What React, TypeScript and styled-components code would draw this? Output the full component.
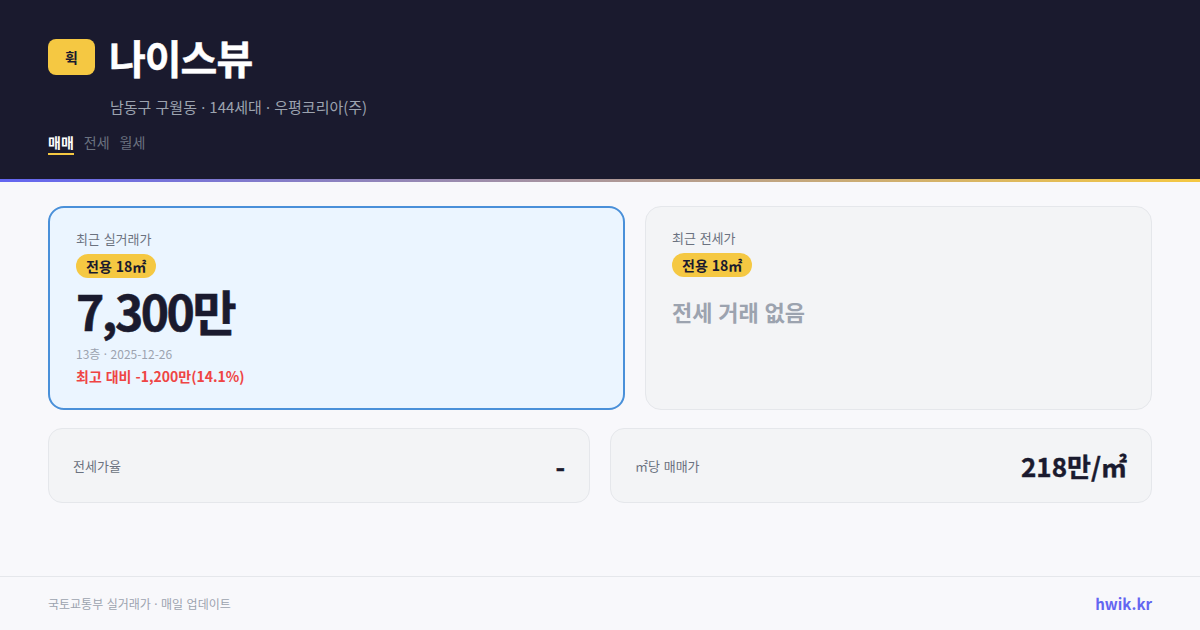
import React from "react";
import styled, { createGlobalStyle } from "styled-components";

const Global = createGlobalStyle`
  * { box-sizing: border-box; }
  html, body { margin: 0; padding: 0; }
  body {
    background: #f8f8fb;
    font-family: "Noto Sans CJK KR", "Noto Sans", sans-serif;
    word-spacing: 0.05em;
  }
`;

const Page = styled.div`
  width: 1200px;
  height: 630px;
  display: flex;
  flex-direction: column;
  background: #f8f8fb;
  overflow: hidden;
`;
const Header = styled.header`
  height: 182px;
  background: #1a1a2e;
  padding: 30px 48px 0;
  border-bottom: 3px solid;
  border-image: linear-gradient(90deg, #6366f1, #f5c842) 1;
`;
const TitleRow = styled.div`
  display: flex;
  align-items: center;
  gap: 14px;
  height: 54px;
`;
const Logo = styled.div`
  width: 47px;
  height: 36px;
  border-radius: 8px;
  background: #f5c842;
  color: #1a1a2e;
  font-size: 14px;
  font-weight: 700;
  display: flex;
  align-items: center;
  justify-content: center;
`;
const Title = styled.h1`
  margin: 0;
  color: #fff;
  font-size: 40px;
  line-height: 54px;
  font-weight: 700;
  letter-spacing: -1px;
  -webkit-text-stroke: 0.5px #fff;
`;
const Sub = styled.div`
  margin: 12px 0 0 62px;
  color: #9ca3af;
  font-size: 15px;
  line-height: 22px;
`;
const Dot = styled.span`
  font-family: "Noto Sans", sans-serif;
`;
const Tabs = styled.div`
  display: flex;
  gap: 10px;
  margin-top: 15px;
`;
const Tab = styled.span<{ $active?: boolean }>`
  height: 22px;
  color: ${(p) => (p.$active ? "#fff" : "#6b7280")};
  font-size: 14px;
  font-weight: ${(p) => (p.$active ? 700 : 400)};
  line-height: 18px;
  border-bottom: 2px solid ${(p) => (p.$active ? "#f5c842" : "transparent")};
`;
const Main = styled.main`
  flex: 1;
  padding: 24px 48px 0;
  display: flex;
  flex-direction: column;
  gap: 18px;
`;
const TopGrid = styled.div`
  display: grid;
  grid-template-columns: 577px 507px;
  grid-template-rows: 204px;
  gap: 20px;
`;
const PriceCard = styled.section<{ $hot?: boolean }>`
  border-radius: 16px;
  border: ${(p) => (p.$hot ? "2px solid #4a90d9" : "1px solid #e5e7eb")};
  background: ${(p) => (p.$hot ? "#ebf5ff" : "#f3f4f6")};
  padding: 21px 26px;
`;
const Label = styled.div`
  color: #6b7280;
  font-size: 13px;
  line-height: 19px;
`;
const Badge = styled.div`
  width: fit-content;
  margin-top: 6px;
  height: 24px;
  padding: 0 10px;
  border-radius: 12px;
  background: #f5c842;
  color: #1a1a2e;
  font-size: 14px;
  line-height: 24px;
  font-weight: 700;
`;
const Price = styled.div`
  color: #1a1a2e;
  font-size: 48px;
  font-weight: 700;
  line-height: 62px;
  letter-spacing: -2.5px;
  margin-top: 1px;
  -webkit-text-stroke: 0.6px #1a1a2e;
`;
const Empty = styled.div`
  color: #9ca3af;
  font-size: 22px;
  font-weight: 700;
  line-height: 32px;
  margin-top: 18px;
`;
const Meta = styled.div`
  color: #9ca3af;
  font-size: 12px;
  line-height: 18px;
  margin-top: 4px;
`;
const Diff = styled.div`
  color: #ef4444;
  font-size: 14px;
  font-weight: 700;
  line-height: 20px;
  margin-top: 2px;
`;
const BottomGrid = styled.div`
  display: grid;
  grid-template-columns: 1fr 1fr;
  gap: 20px;
`;
const StatCard = styled.section`
  height: 75px;
  border-radius: 14px;
  border: 1px solid #e5e7eb;
  background: #f3f4f6;
  padding: 0 24px;
  display: flex;
  align-items: center;
  justify-content: space-between;
`;
const StatValue = styled.div`
  color: #1a1a2e;
  font-size: 26px;
  font-weight: 700;
  -webkit-text-stroke: 0.4px #1a1a2e;
`;
const Footer = styled.footer`
  height: 54px;
  border-top: 1px solid #e5e7eb;
  padding: 0 48px;
  display: flex;
  align-items: center;
  justify-content: space-between;
`;
const FootText = styled.span`
  color: #9ca3af;
  font-size: 12px;
`;
const Brand = styled.span`
  color: #6366f1;
  font-size: 15px;
  font-weight: 700;
`;

export default function App() {
  return (
    <Page>
      <Global />
      <Header>
        <TitleRow>
          <Logo>휙</Logo>
          <Title>나이스뷰</Title>
        </TitleRow>
        <Sub>
          남동구 구월동 <Dot>·</Dot> 144세대 <Dot>·</Dot> 우평코리아(주)
        </Sub>
        <Tabs>
          <Tab $active>매매</Tab>
          <Tab>전세</Tab>
          <Tab>월세</Tab>
        </Tabs>
      </Header>
      <Main>
        <TopGrid>
          <PriceCard $hot>
            <Label>최근 실거래가</Label>
            <Badge>전용 18㎡</Badge>
            <Price>7,300만</Price>
            <Meta>
              13층 <Dot>·</Dot> 2025-12-26
            </Meta>
            <Diff>최고 대비 -1,200만(14.1%)</Diff>
          </PriceCard>
          <PriceCard>
            <Label>최근 전세가</Label>
            <Badge>전용 18㎡</Badge>
            <Empty>전세 거래 없음</Empty>
          </PriceCard>
        </TopGrid>
        <BottomGrid>
          <StatCard>
            <Label>전세가율</Label>
            <StatValue>-</StatValue>
          </StatCard>
          <StatCard>
            <Label>㎡당 매매가</Label>
            <StatValue>218만/㎡</StatValue>
          </StatCard>
        </BottomGrid>
      </Main>
      <Footer>
        <FootText>
          국토교통부 실거래가 <Dot>·</Dot> 매일 업데이트
        </FootText>
        <Brand>hwik.kr</Brand>
      </Footer>
    </Page>
  );
}
